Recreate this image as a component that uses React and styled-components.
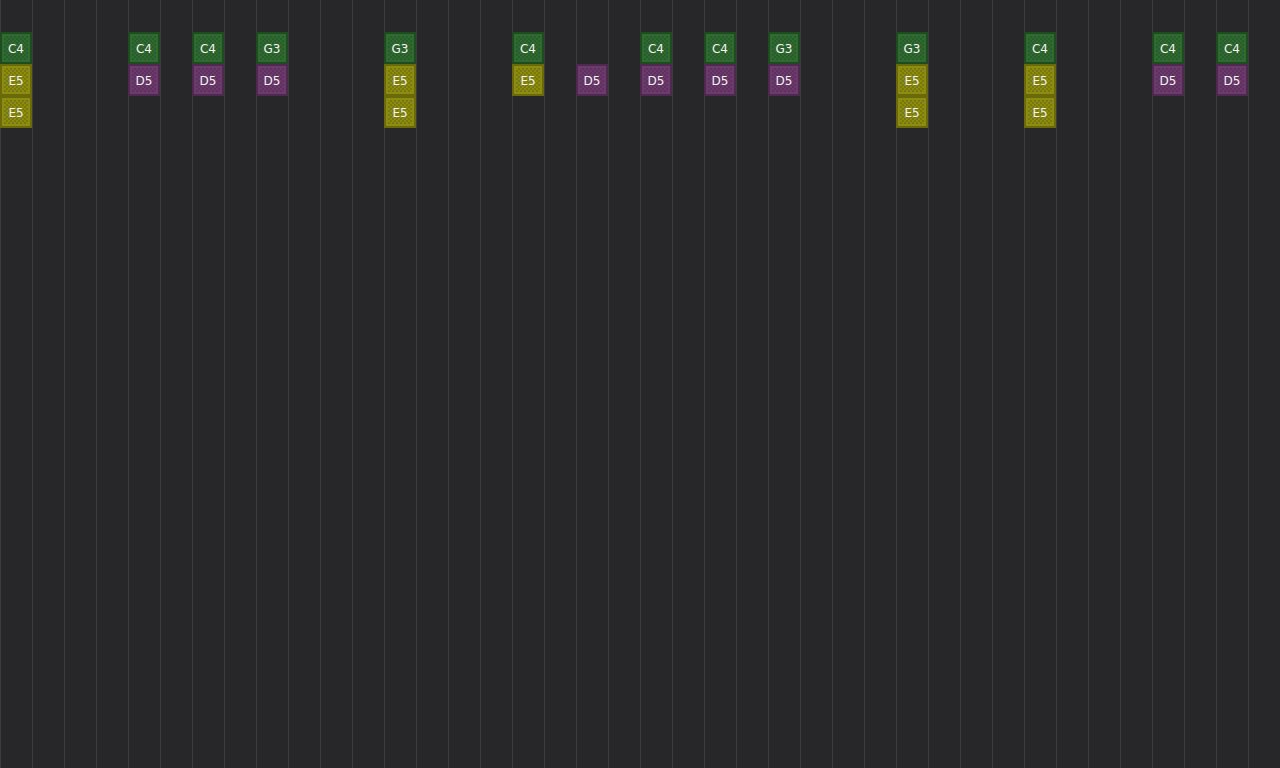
import React from "react";
import styled, { createGlobalStyle } from "styled-components";

const GlobalStyle = createGlobalStyle`
  html, body {
    margin: 0;
    padding: 0;
    background: #272729;
    overflow: hidden;
  }
  * { box-sizing: border-box; }
`;

const PALETTE = {
  green: { fill: "#2f6b31", edge: "#1f4b21", check: "rgba(0,0,0,0.14)" },
  yellow: { fill: "#8c8c10", edge: "#6a6a0a", check: "rgba(0,0,0,0.14)" },
  purple: { fill: "#6c3a6d", edge: "#4f2a50", check: "rgba(0,0,0,0.14)" },
};

const PITCH_COLOR = { C4: "green", G3: "green", E5: "yellow", D5: "purple" };

// step index -> notes stacked from the second lane down
const SEQUENCE = [
  [0, ["C4", "E5", "E5"]],
  [4, ["C4", "D5"]],
  [6, ["C4", "D5"]],
  [8, ["G3", "D5"]],
  [12, ["G3", "E5", "E5"]],
  [16, ["C4", "E5"]],
  [18, [null, "D5"]],
  [20, ["C4", "D5"]],
  [22, ["C4", "D5"]],
  [24, ["G3", "D5"]],
  [28, ["G3", "E5", "E5"]],
  [32, ["C4", "E5", "E5"]],
  [36, ["C4", "D5"]],
  [38, ["C4", "D5"]],
];

const Board = styled.div`
  display: grid;
  grid-template-columns: repeat(40, 32px);
  grid-auto-rows: 32px;
  width: 1280px;
  height: 768px;
  background-color: #272729;
  background-image: linear-gradient(to right, #3c3c3e 1px, transparent 1px);
  background-size: 32px 100%;
`;

const Note = styled.div`
  grid-column: ${(p) => p.$step + 1};
  grid-row: ${(p) => p.$lane + 1};
  display: flex;
  align-items: center;
  justify-content: center;
  width: 32px;
  height: 32px;
  padding-top: 2px;
  border: 2px solid ${(p) => PALETTE[p.$tone].edge};
  background-color: ${(p) => PALETTE[p.$tone].fill};
  background-image: conic-gradient(
    ${(p) => PALETTE[p.$tone].check} 25%,
    transparent 0 50%,
    ${(p) => PALETTE[p.$tone].check} 0 75%,
    transparent 0
  );
  background-size: 4px 4px;
  box-shadow: inset 0 0 0 2px ${(p) => PALETTE[p.$tone].fill};
  font-family: "DejaVu Sans", "Liberation Sans", sans-serif;
  font-size: 12px;
  line-height: 1;
  color: #f2f2f2;
  user-select: none;
`;

export default function App() {
  return (
    <>
      <GlobalStyle />
      <Board>
        {SEQUENCE.flatMap(([step, pitches]) =>
          pitches.map((pitch, i) =>
            pitch ? (
              <Note
                key={`${step}-${i}`}
                $step={step}
                $lane={i + 1}
                $tone={PITCH_COLOR[pitch]}
              >
                {pitch}
              </Note>
            ) : null
          )
        )}
      </Board>
    </>
  );
}
